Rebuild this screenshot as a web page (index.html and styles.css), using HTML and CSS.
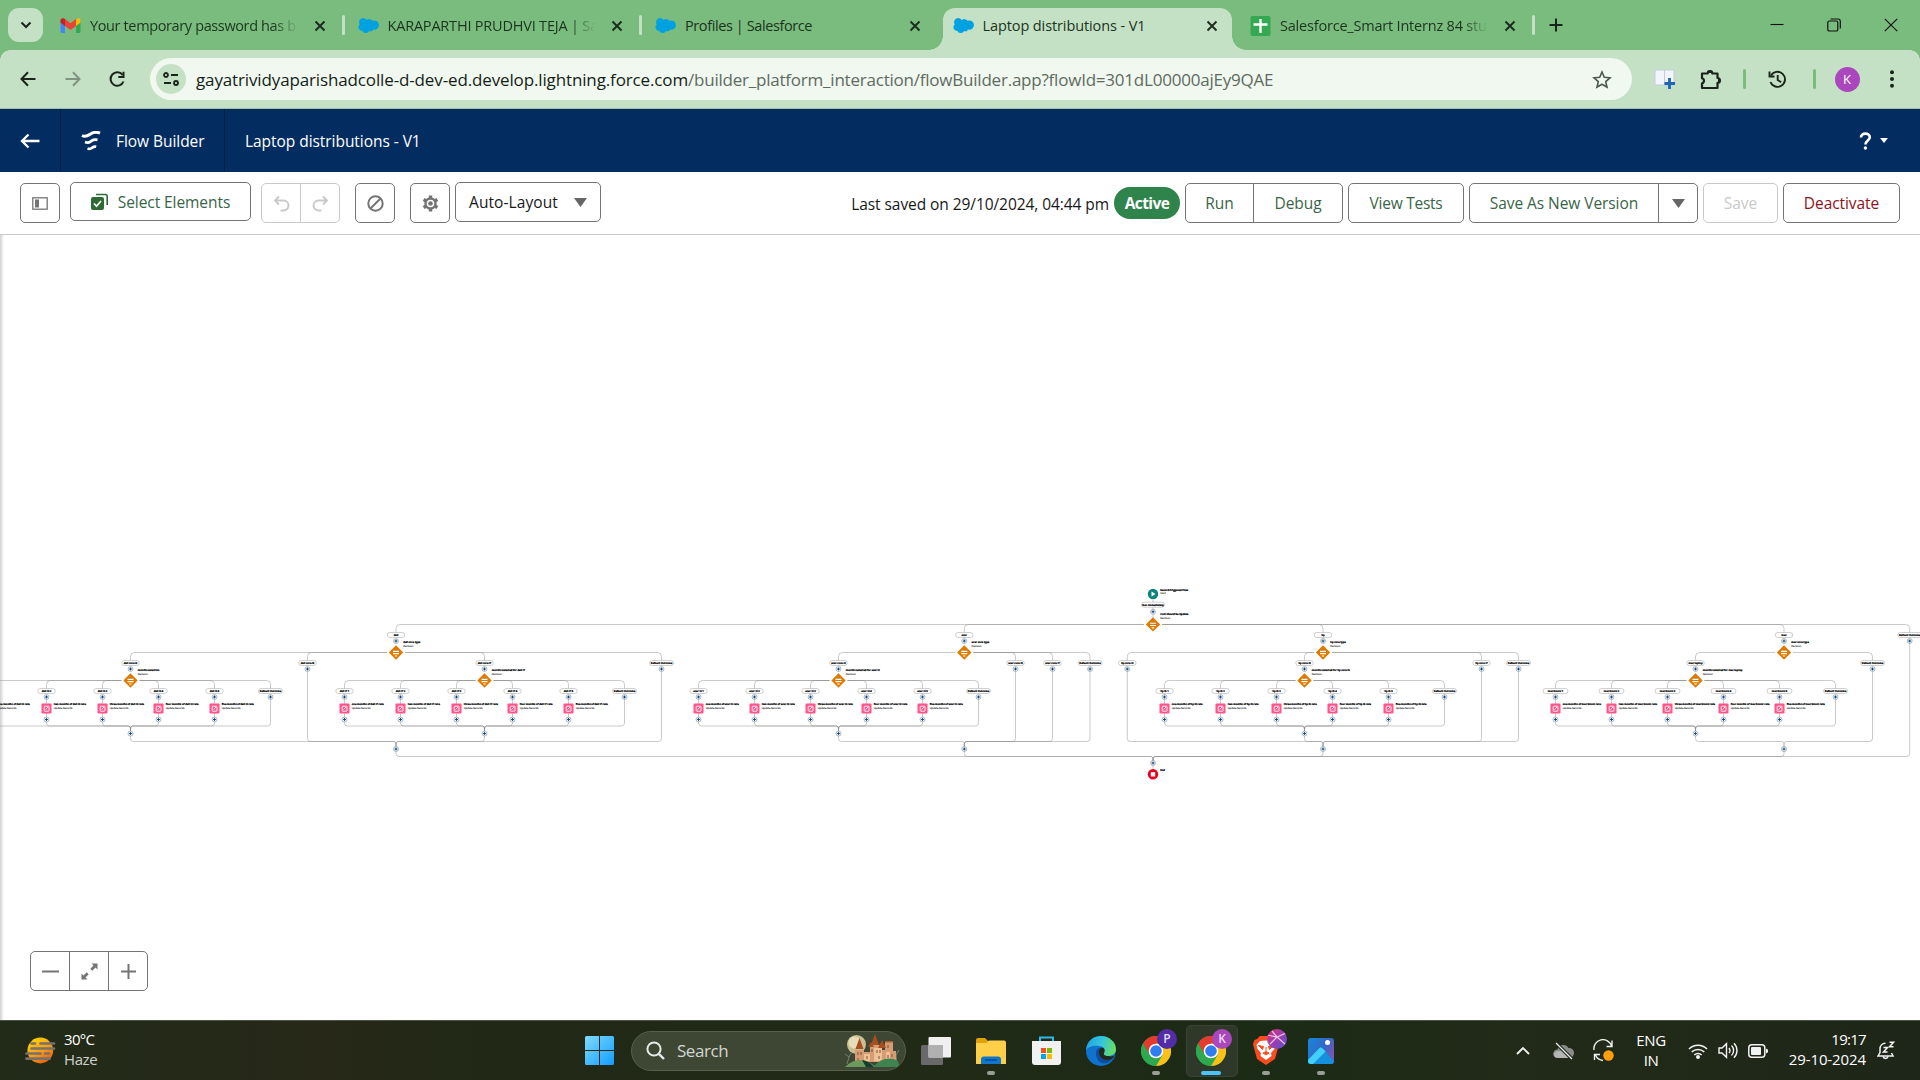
FILE: index.html
```html
<!DOCTYPE html>
<html lang="en">
<head>
<meta charset="utf-8">
<title>Laptop distributions - V1</title>
<link rel="stylesheet" href="styles.css">
</head>
<body>
<svg class="defs" width="0" height="0" aria-hidden="true">
  <defs>
    <symbol id="i-close" viewBox="0 0 12 12"><path d="M1.500 1.500l9 9M10.500 1.500l-9 9" fill="none" stroke="#1c2a1e" stroke-width="1.900"/></symbol>
    <symbol id="i-sf" viewBox="0 0 24 17"><path fill="#00a1e0" d="M10 2.200A4.600 4.600 0 0 1 16.600 3.100 5.300 5.300 0 1 1 17.600 13.200 3.800 3.800 0 0 1 12.700 14.800 4.400 4.400 0 0 1 4.800 14.400 4 4 0 0 1 2 7.300 4.700 4.700 0 0 1 10 2.200z"/></symbol>
    <symbol id="i-chrome" viewBox="0 0 30 30">
      <circle cx="15" cy="15" r="15" fill="#34a853"/>
      <path d="M2 7.500A15 15 0 0 1 28 7.500H15L8.500 18.750z" fill="#e33b2e"/>
      <path d="M28 7.500A15 15 0 0 1 15 30L21.500 18.750 15 7.500z" fill="#fbc116"/>
      <path d="M2 7.500A15 15 0 0 0 15 30L21.500 18.750H8.500z" fill="#2da94f"/>
      <circle cx="15" cy="15" r="7.300" fill="#fff"/><circle cx="15" cy="15" r="5.800" fill="#2f7df0"/>
    </symbol>
  </defs>
</svg>

<header class="tabstrip">
  <button class="tab-search"><svg width="12" height="8" viewBox="0 0 12 8"><path d="M1.500 1.500L6 6l4.500-4.500" fill="none" stroke="#1b241c" stroke-width="2"/></svg></button>
  <div class="tab">
    <svg class="fav" width="20" height="15" viewBox="0 0 20 15"><path fill="#4285f4" d="M0 2h4.500v13H1.500A1.500 1.500 0 0 1 0 13.500z"/><path fill="#34a853" d="M15.500 2H20v11.500a1.500 1.500 0 0 1-1.500 1.500h-3z"/><path fill="#fbbc04" d="M15.500 1.500C17-.3 20-.3 20 2.500v2L15.500 8z"/><path fill="#c5221f" d="M0 2.500C0-.3 3-.3 4.500 1v7L0 4.500z"/><path fill="#ea4335" d="M4.500 1L10 5.200 15.500 1v7L10 12 4.500 8z"/></svg>
    <span class="title fade tight">Your temporary password has b</span><svg class="x" width="12" height="12"><use href="#i-close"/></svg>
  </div>
  <div class="tab sep">
    <svg class="fav" width="21" height="15"><use href="#i-sf"/></svg>
    <span class="title fade">KARAPARTHI PRUDHVI TEJA | Sa</span><svg class="x" width="12" height="12"><use href="#i-close"/></svg>
  </div>
  <div class="tab sep">
    <svg class="fav" width="21" height="15"><use href="#i-sf"/></svg>
    <span class="title tighter">Profiles | Salesforce</span><svg class="x" width="12" height="12"><use href="#i-close"/></svg>
  </div>
  <div class="tab active">
    <svg class="fav" width="21" height="15"><use href="#i-sf"/></svg>
    <span class="title wide">Laptop distributions - V1</span><svg class="x" width="12" height="12"><use href="#i-close"/></svg>
  </div>
  <div class="tab last">
    <svg class="fav" width="20" height="20" viewBox="0 0 20 20"><rect width="20" height="20" rx="2" fill="#34a853"/><path d="M10 3v14M3 8.500h14" stroke="#fff" stroke-width="2.400"/></svg>
    <span class="title fade">Salesforce_Smart Internz 84 stu</span><svg class="x" width="12" height="12"><use href="#i-close"/></svg>
  </div>
  <svg class="newtab" width="14" height="14" viewBox="0 0 14 14"><path d="M7 .5v13M.5 7h13" stroke="#1b241c" stroke-width="2"/></svg>
  <div class="winctl">
    <svg width="14" height="14" viewBox="0 0 14 14"><path d="M.5 6.500h13" stroke="#111" stroke-width="1.100"/></svg>
    <svg width="14" height="14" viewBox="0 0 14 14"><g fill="none" stroke="#111" stroke-width="1.200"><rect x=".8" y="3" width="10" height="10" rx="1.600"/><path d="M3.500 1H11a2.300 2.300 0 0 1 2.300 2.300V10.500"/></g></svg>
    <svg width="14" height="14" viewBox="0 0 14 14"><path d="M.8.8l12.400 12.400M13.200.8L.8 13.200" stroke="#111" stroke-width="1.200"/></svg>
  </div>
</header>

<div class="addressbar">
  <div class="navbtns">
    <svg width="16" height="16" viewBox="0 0 16 16"><path d="M15.500 8H1.500M8 1.300L1.500 8 8 14.700" fill="none" stroke="#1b241c" stroke-width="2"/></svg>
    <svg width="16" height="16" viewBox="0 0 16 16"><path d="M.5 8h14M8 1.300L14.500 8 8 14.700" fill="none" stroke="#7f9380" stroke-width="2"/></svg>
    <svg width="17" height="17" viewBox="0 0 17 17"><path d="M14.500 10.500A6.700 6.700 0 1 1 13.600 4" fill="none" stroke="#1b241c" stroke-width="2"/><path d="M15.500.8V7H9.300V5h4.200V.8z" fill="#1b241c"/></svg>
  </div>
  <div class="omnibox">
    <span class="site"><svg width="16" height="14" viewBox="0 0 16 14"><g fill="none" stroke="#1b241c" stroke-width="1.800"><circle cx="3" cy="3" r="2"/><path d="M8 3h7M1 11h7"/><circle cx="13" cy="11" r="2"/></g></svg></span>
    <span class="url"><span class="host">gayatrividyaparishadcolle-d-dev-ed.develop.lightning.force.com</span><span class="path">/builder_platform_interaction/flowBuilder.app?flowId=301dL00000ajEy9QAE</span></span>
    <svg class="star" width="20" height="19" viewBox="0 0 20 19"><path d="M10 2l2.300 5.300 5.700.5-4.300 3.800 1.300 5.600-5-3-5 3 1.300-5.600L2 7.800l5.700-.5z" fill="none" stroke="#4b574c" stroke-width="1.600"/></svg>
  </div>
  <div class="exts">
    <svg class="reader" width="22" height="20" viewBox="0 0 22 20"><rect x="1" y="1" width="19" height="15" rx="1" fill="#f2f5fb" stroke="#c4cbe0"/><path d="M10.500 1v15" stroke="#c4cbe0"/><path d="M15.500 9v11M10.500 14.500h10.500" stroke="#1f65b7" stroke-width="2.800"/></svg>
    <svg class="puzzle" width="22" height="21" viewBox="0 0 22 21"><path d="M2 4.500h5.700a2.300 2.300 0 0 1 4.600 0H17.500V9a2.400 2.400 0 0 1 0 4.800V19H2v-4.600a2.700 2.700 0 0 0 0-5.200z" fill="none" stroke="#1b241c" stroke-width="2.200" stroke-linejoin="round"/><path d="M7.500 4a2.400 2.400 0 0 1 4.800 0zM18 9a2.400 2.400 0 0 1 0 4.800z" fill="#1b241c"/></svg>
    <i class="bar"></i>
    <svg class="history" width="19" height="19" viewBox="0 0 19 19"><g fill="none" stroke="#1b241c" stroke-width="1.900"><path d="M2.500 12A7.500 7.500 0 1 0 3 5.600"/><path d="M1.500 1.500V6.500h5M9.700 5v5l3.500 2.200"/></g></svg>
    <i class="bar bar-end"></i>
    <span class="avatar">K</span>
    <svg class="menu" width="6" height="18" viewBox="0 0 6 18"><g fill="#1b241c"><circle cx="3" cy="2.200" r="2"/><circle cx="3" cy="9" r="2"/><circle cx="3" cy="15.800" r="2"/></g></svg>
  </div>
</div>

<nav class="appbar">
  <span class="back"><svg width="20" height="16" viewBox="0 0 20 16"><path d="M19.500 8H2M8.500 1.500L2 8l6.500 6.500" fill="none" stroke="#fff" stroke-width="2.300"/></svg></span>
  <span class="brand"><svg width="20" height="20" viewBox="0 0 20 20"><g fill="none" stroke="#fff" stroke-width="3"><path d="M1 4.500C5 6.500 7 4.500 9.500 3S15.500.7 19 2.200"/><path d="M4 11c3.500 1.500 4.500.2 6.500-1.200s3.500-1.500 6-.9" stroke-width="2.700"/><path d="M6.500 17.500c3 1 3.500 0 4.800-.9s2-1.300 3.900-.9" stroke-width="2.700"/></g></svg><span>Flow Builder</span></span>
  <span class="flowname">Laptop distributions - V1</span>
  <span class="help"><svg width="13" height="18" viewBox="0 0 13 18"><path d="M2 5.500C2 0 10.800.6 10.800 5.200c0 3.300-4.300 3.300-4.300 7.300" fill="none" stroke="#fff" stroke-width="2.700"/><circle cx="6.400" cy="16" r="1.700" fill="#fff"/></svg><svg width="8" height="5" viewBox="0 0 8 5"><path d="M0 0h8L4 5z" fill="#fff"/></svg></span>
</nav>

<div class="toolbar">
  <button class="btn icon"><svg width="16" height="13" viewBox="0 0 16 13"><rect x=".8" y=".8" width="14.400" height="11.400" fill="none" stroke="#747474" stroke-width="1.300"/><path d="M3 2.500h4v8H3z" fill="#747474"/></svg></button>
  <button class="btn select"><svg width="17" height="17" viewBox="0 0 17 17"><path d="M5 1.500h9.500a1.700 1.700 0 0 1 1.700 1.700V12" fill="none" stroke="#2e6b34" stroke-width="1.600"/><rect y="4" width="13" height="13" rx="2" fill="#2e6b34"/><path d="M3 10.500l2.500 2.700L10 8" fill="none" stroke="#fff" stroke-width="1.700"/></svg><span>Select Elements</span></button>
  <span class="group off"><button class="btn icon"><svg width="17" height="17" viewBox="0 0 17 17"><path d="M6 1.500L2 5.500l4 4M2 5.500h8.500a5 5 0 0 1 0 10H7.500" fill="none" stroke="#c9c9c9" stroke-width="1.900"/></svg></button><button class="btn icon"><svg width="17" height="17" viewBox="0 0 17 17"><path d="M11 1.500l4 4-4 4M15 5.500H6.500a5 5 0 0 0 0 10H9.500" fill="none" stroke="#c9c9c9" stroke-width="1.900"/></svg></button></span>
  <button class="btn icon ban"><svg width="17" height="17" viewBox="0 0 17 17"><g fill="none" stroke="#747474" stroke-width="2"><circle cx="8.500" cy="8.500" r="7.200"/><path d="M3.500 13.500l10-10"/></g></svg></button>
  <button class="btn icon gear"><svg width="17" height="17" viewBox="0 0 17 17"><g fill="none" stroke="#747474"><circle cx="8.500" cy="8.500" r="5" stroke-width="2.400"/><path d="M8.500 .5v3M8.500 13.500v3M1.600 4.500l2.600 1.500M12.800 11l2.600 1.500M1.600 12.500L4.200 11M12.800 6l2.600-1.500" stroke-width="3.400"/></g><circle cx="8.500" cy="8.500" r="2.300" fill="#747474"/></svg></button>
  <button class="btn layout"><span>Auto-Layout</span><svg width="13" height="9" viewBox="0 0 13 9"><path d="M0 0h13L6.500 9z" fill="#666"/></svg></button>
  <span class="saved">Last saved on 29/10/2024, 04:44 pm</span>
  <span class="badge">Active</span>
  <span class="group"><button class="btn w-run">Run</button><button class="btn w-debug">Debug</button></span>
  <button class="btn w-tests">View Tests</button>
  <span class="group"><button class="btn w-saveas">Save As New Version</button><button class="btn icon"><svg width="13" height="9" viewBox="0 0 13 9"><path d="M0 0h13L6.500 9z" fill="#666"/></svg></button></span>
  <button class="btn w-save">Save</button>
  <button class="btn w-deact">Deactivate</button>
</div>

<main class="canvas">
  <svg id="flow" class="flow" width="1920" height="785" viewBox="0 235 1920 785"></svg>
  <div class="zoomctl">
    <button><svg width="17" height="17" viewBox="0 0 17 17"><path d="M0 8.500h17" stroke="#747474" stroke-width="2"/></svg></button>
    <button><svg width="17" height="17" viewBox="0 0 17 17"><path d="M10.500.5h6v6l-2-2-3.200 3.200-2-2L12.500 2.500zM.5 16.500v-6l2 2 3.200-3.200 2 2-3.200 3.200 2 2z" fill="#747474"/></svg></button>
    <button><svg width="17" height="17" viewBox="0 0 17 17"><path d="M1 8.500h15M8.500 1v15" stroke="#747474" stroke-width="2"/></svg></button>
  </div>
</main>

<footer class="taskbar">
  <div class="weather">
    <svg width="31" height="27" viewBox="0 0 31 27"><defs><linearGradient id="sun" x1=".2" y1="0" x2=".8" y2="1"><stop offset="0" stop-color="#ffd400"/><stop offset=".5" stop-color="#f9a11a"/><stop offset="1" stop-color="#e8590c"/></linearGradient></defs><circle cx="15.300" cy="13.500" r="12.900" fill="url(#sun)"/><g stroke="#77716c" stroke-width="2.700" stroke-linecap="round"><path d="M6.500 6.500h3.500M15.500 6.500h13.500M6.500 11.500H29M1.500 16.500h14M20 16.500h4M1.500 21.700h23"/></g></svg>
    <div class="two"><span class="temp">30°C</span><span class="dim">Haze</span></div>
  </div>
  <svg class="start" width="29" height="29" viewBox="0 0 29 29"><defs><linearGradient id="win" x1="0" y1="0" x2="1" y2="1"><stop offset="0" stop-color="#7fdcff"/><stop offset="1" stop-color="#129cff"/></linearGradient></defs><path d="M0 1.500Q0 0 1.500 0H14v14H0zM15 0h12.500Q29 0 29 1.500V14H15zM0 15h14v14H1.500Q0 29 0 27.500zM15 15h14v12.500Q29 29 27.500 29H15z" fill="url(#win)"/></svg>
  <div class="search">
    <svg width="19" height="19" viewBox="0 0 19 19"><circle cx="8" cy="8" r="6.600" fill="none" stroke="#e8eaea" stroke-width="2"/><path d="M12.800 12.800L18 18" stroke="#e8eaea" stroke-width="2.400"/></svg>
    <span>Search</span>
    <svg class="castle" width="56" height="33" viewBox="0 0 56 33"><circle cx="12.500" cy="10.500" r="9.500" fill="#c9bf92"/><circle cx="10.500" cy="8.500" r="6" fill="#e6ddb8"/><path d="M3 30l2-7-4-3M5 23l2-4M53 30l-1-9 3-5M52 21l-3-4" stroke="#78806e" fill="none"/><path d="M11 16h9v2h6v-7h10v5h5V8h8v9h3v11H11z" fill="#d69d74"/><path d="M30 14h8v13h-8zM20 20h6v7h-6zM42 18h4v9h-4z" fill="#efc294"/><path d="M15.500 4l4 11h-8zM31 0l4 11h-8zM27 8l3 5h-6zM38 6l4 8h-8z" fill="#a84c22"/><path d="M41 7h8v1.500h-8z" fill="#a85c32"/><path d="M14 18v3M17 18v3M28 15v3M33 16v3M36 16v3M44 11v3M14 24v3M23 22v3M35 22v3M44 21v3M48 20v3" stroke="#7c5040"/><path d="M1 33q14-14 31 0z" fill="#6b9a5c"/><path d="M18 26q7 1 12 7H22z" fill="#133d2c"/><path d="M29 33q12-13 25-6l1 4-2 2z" fill="#3f8450"/></svg>
  </div>
  <div class="apps">
    <span class="app"><svg width="30" height="28" viewBox="0 0 30 28"><rect x="0" y="8" width="22" height="20" rx="1.500" fill="#69696b"/><rect x="7.500" width="22.500" height="20.500" rx="1" fill="#f0f0f0"/><path d="M7.500 8H22v12.500H7.500z" fill="#b0b0b0"/></svg></span>
    <span class="app run"><svg width="30" height="28" viewBox="0 0 30 28"><path d="M0 3a2 2 0 0 1 2-2h7l3 3v6H0z" fill="#e3a008"/><path d="M0 6h10l3-2.500h15a2 2 0 0 1 2 2V27H0z" fill="#ffcf48"/><path d="M5 27v-5q0-2.500 3-2.500h14q3 0 3 2.500v5z" fill="#1277cc"/><path d="M9 23h12" stroke="#0a4d8f" stroke-width="1.500"/></svg></span>
    <span class="app"><svg width="29" height="30" viewBox="0 0 29 30"><path d="M8 6V1.500h13V6" fill="none" stroke="#31b7ea" stroke-width="2"/><path d="M0 5h29v21a3 3 0 0 1-3 3H3a3 3 0 0 1-3-3z" fill="#f1f1f1"/><path d="M9 12h5v5H9z" fill="#f25022"/><path d="M15 12h5v5h-5z" fill="#7fba00"/><path d="M9 18h5v5H9z" fill="#00a4ef"/><path d="M15 18h5v5h-5z" fill="#ffb900"/></svg></span>
    <span class="app"><svg width="30" height="30" viewBox="0 0 30 30"><defs><linearGradient id="edge" x1="0" y1=".3" x2="1" y2=".5"><stop offset="0" stop-color="#1ea4e0"/><stop offset=".5" stop-color="#35c4dc"/><stop offset="1" stop-color="#68df5e"/></linearGradient></defs><circle cx="15" cy="15" r="15" fill="#0d73cf"/><path d="M0 14C1 5 7 0 15 0s15 6 15 13c0 5-4 7-8 7-3 0-5-1-4-3 2-4-1-7-5-7C7 9 2 11 0 14z" fill="url(#edge)"/><path d="M10 17c0-4 3-6 5-5 2 .5 3 2 2.500 4-1 4 3 7 9.500 4.500l1-.3C25 26 20 28 16 27c-4-1-6-5-6-10z" fill="#0f4d9c"/><path d="M18 17c2-4-1-6-3-5-3 2-3 8 2 11 4 2 8 1 11-2l2-5v3c-3 2-6 1.500-8 1-3 0-5-1-4-3z" fill="#222918"/></svg></span>
    <span class="app run"><svg width="30" height="30"><use href="#i-chrome"/></svg><b class="bdg p">P</b></span>
    <span class="app run cur"><svg width="30" height="30"><use href="#i-chrome"/></svg><b class="bdg k">K</b></span>
    <span class="app run"><svg width="26" height="29" viewBox="0 0 26 29"><path d="M7 0h12l3 3 2.500 1L26 8l-1 4-3 11-9 6-9-6L1 12 0 8l1.500-4L4 3z" fill="#fb4c1f"/><path d="M13 4.500l6 .5 3.500 4-1 4-3.500 4 .5 3-5.500 4-5.500-4L8 17l-3.500-4-1-4L7 5z" fill="#fff"/><path d="M5.500 9.500l5 1-1 3zM20.500 9.500l-5 1 1 3zM10 17l3-1.500L16 17l-3 2zM13 11v4" fill="#fb4c1f" stroke="#fb4c1f"/></svg><b class="bdg g"><svg width="20" height="20" viewBox="0 0 20 20"><path d="M0 6l10 2 9-4M5 2l5 6 8 7M3 15l7-7" fill="none" stroke="#f1bfe6" stroke-width="1.200"/></svg></b></span>
    <span class="app run"><svg width="26" height="26" viewBox="0 0 26 26"><defs><linearGradient id="ph" x1="0" x2="1" y1="0" y2=".6"><stop offset="0" stop-color="#1887dc"/><stop offset=".6" stop-color="#3267c4"/><stop offset="1" stop-color="#7b55b0"/></linearGradient></defs><rect width="26" height="26" rx="3" fill="url(#ph)"/><path d="M0 23l11-12.500a2.500 2.500 0 0 1 3.800 0L26 23a3 3 0 0 1-3 3H3a3 3 0 0 1-3-3z" fill="#1590dd"/><path d="M0 22L11 10.500a2.500 2.500 0 0 1 3.600 0l3 3L5 26H3a3 3 0 0 1-3-3z" fill="#41d0fa"/><circle cx="19.500" cy="4.500" r="2.500" fill="#fff"/></svg></span>
  </div>
  <div class="tray">
    <svg width="14" height="9" viewBox="0 0 14 9"><path d="M1 8l6-6 6 6" fill="none" stroke="#f2f2f2" stroke-width="1.900"/></svg>
    <svg class="cloud" width="21" height="18" viewBox="0 0 21 18"><path d="M4.500 16a4.300 4.300 0 0 1 0-8.600A6 6 0 0 1 15.500 6a5 5 0 0 1 1 10z" fill="#8b8d89"/><path d="M6 16q-5 0-5-3.500T6 9h3l8 7z" fill="#b6b7b4"/><path d="M3 1l16 16" stroke="#222b1e" stroke-width="3.500"/><path d="M3 1l16 16" stroke="#e8e8e8" stroke-width="1.300"/></svg>
    <svg class="sync" width="21" height="23" viewBox="0 0 21 23"><g fill="none" stroke="#f0f0f0" stroke-width="1.400"><path d="M1 11A9 9 0 0 1 18.500 7M19 1.500V7.500H13.500M10 21.500A9 9 0 0 1 2.500 16M1.500 21V15.500H7"/></g><circle cx="15.500" cy="16.500" r="5.200" fill="#ff9d0a"/></svg>
    <div class="two mid lang"><span>ENG</span><span>IN</span></div>
    <svg class="wifi" width="20" height="16" viewBox="0 0 20 16"><g fill="none" stroke="#f2f2f2" stroke-width="1.600"><path d="M1 6a12.700 12.700 0 0 1 18 0M3.700 9a9 9 0 0 1 12.600 0M6.300 12a5.300 5.300 0 0 1 7.400 0"/></g><circle cx="10" cy="14" r="2" fill="#f2f2f2"/></svg>
    <svg class="vol" width="20" height="17" viewBox="0 0 20 17"><g fill="none" stroke="#f2f2f2" stroke-width="1.400"><path d="M1 6h3l4.500-4.300v13.600L4 11H1z"/><path d="M11 6a4 4 0 0 1 0 5M13.500 3.500a7 7 0 0 1 0 10M16 1.200a10.500 10.500 0 0 1 0 14.600"/></g></svg>
    <svg class="vol" width="20" height="14" viewBox="0 0 20 14"><rect x=".8" y=".8" width="16" height="12.400" rx="3" fill="none" stroke="#f2f2f2" stroke-width="1.500"/><rect x="3" y="3" width="10" height="8" rx="1" fill="#f2f2f2"/><path d="M18 4.500v5l2-1.200V5.700z" fill="#f2f2f2"/></svg>
    <div class="two end clock"><span class="time">19:17</span><span>29-10-2024</span></div>
    <svg class="bell" width="18" height="19" viewBox="0 0 18 19"><g fill="none" stroke="#f2f2f2" stroke-width="1.500"><path d="M8.500 2.300C5 2.300 3 5 3 8v3.500L1 15h15l-1.500-3"/><path d="M6 15.500a2.600 2.600 0 0 0 5 0"/><path d="M6.500 6.500h4l-4 4.500h4M12.500 1.200h4l-4 4.500h4"/></g></svg>
  </div>
</footer>
<script src="flow.js"></script>
</body>
</html>
```
FILE: styles.css
```css
* { box-sizing: border-box; }
body { margin: 0; width: 1920px; height: 1080px; overflow: hidden; display: flex; flex-direction: column; background: #fff; font-family: "Open Sans", "Noto Sans", sans-serif; font-size: 16px; color: #181818; }
.defs { position: absolute; }
button { font: inherit; letter-spacing: inherit; margin: 0; padding: 0; background: none; border: 0; color: inherit; }
svg { display: block; flex: none; }

.tabstrip { height: 50px; flex: none; display: flex; align-items: center; background: #7abc7d; padding-left: 8px; }
.tab-search { width: 35px; height: 34px; border-radius: 11px; background: #c5e1c5; display: grid; place-items: center; margin-right: 4px; }
.tab { position: relative; width: 297.5px; height: 42px; margin-top: 8px; padding: 0 19px 7px 13px; display: flex; align-items: center; }
.tab.sep::before { content: ""; position: absolute; left: -3px; top: 7px; width: 3px; height: 20px; border-radius: 2px; background: #c5e1c5; }
.tab.last::after { content: ""; position: absolute; right: 0; top: 7px; width: 3px; height: 20px; border-radius: 2px; background: #c5e1c5; }
.fav { width: 21px; margin-right: 9px; }
.title { flex: 1; white-space: nowrap; overflow: hidden; font-size: 14.5px; color: #1b3420; letter-spacing: -.2px; margin-right: 16px; }
.title.tight { letter-spacing: -.37px; }
.title.tighter { letter-spacing: -.4px; }
.title.wide { letter-spacing: -.1px; }
.title.fade { -webkit-mask-image: linear-gradient(90deg, #000 88%, transparent); mask-image: linear-gradient(90deg, #000 88%, transparent); }
.tab.active::before { content: ""; position: absolute; z-index: 0; left: 3px; right: 5px; top: 0; bottom: 0; background: #c5e1c5; border-radius: 12px 12px 0 0; }
.tab.active::after { content: ""; position: absolute; left: -11px; right: -9px; bottom: 0; height: 14px; background: radial-gradient(circle at 0 0, transparent 13.5px, #c5e1c5 14px) left / 14px 14px no-repeat, radial-gradient(circle at 100% 0, transparent 13.5px, #c5e1c5 14px) right / 14px 14px no-repeat; }
.tab > * { position: relative; z-index: 1; }
.newtab { margin-left: 14.5px; }
.winctl { margin-left: auto; display: flex; gap: 43px; padding-right: 22px; }

.addressbar { height: 59px; flex: none; display: flex; align-items: center; background: #c5e1c5; border-bottom: 1px solid #a3bda4; position: relative; }
.addressbar::before { content: ""; position: absolute; inset: 0 0 auto; height: 10px; background: radial-gradient(circle at 100% 100%, transparent 9.5px, #7abc7d 10px) left / 10px 10px no-repeat, radial-gradient(circle at 0 100%, transparent 9.5px, #7abc7d 10px) right / 10px 10px no-repeat; }
.navbtns { width: 150px; padding-left: 20px; display: flex; align-items: center; gap: 28.5px; }
.omnibox { width: 1482px; height: 42px; border-radius: 21px; background: #f0f8f0; display: flex; align-items: center; padding: 0 20px 0 6px; }
.site { width: 30px; height: 30px; border-radius: 50%; background: #c5e1c5; display: grid; place-items: center; margin-right: 10px; }
.url { flex: 1; font-size: 17px; color: #5f6b60; white-space: nowrap; }
.host { color: #161d17; letter-spacing: -.135px; }
.path { letter-spacing: -.22px; }
.exts { flex: 1; display: flex; align-items: center; padding-left: 22px; }
.puzzle { margin-left: 24px; }
.bar { width: 3px; height: 20px; border-radius: 2px; background: #7abc7d; margin-left: 20.5px; }
.history { margin-left: 22px; }
.bar-end { margin-left: 26px; }
.avatar { width: 25px; height: 25px; border-radius: 50%; background: #ab47bc; color: #fff; font-size: 13px; line-height: 25px; text-align: center; margin-left: 19px; }
.menu { margin-left: 29.5px; }

.appbar { height: 63px; flex: none; background: #032d60; color: #fff; display: flex; align-items: center; font-size: 15.5px; letter-spacing: -.05px; }
.back { width: 61px; height: 63px; padding-left: 20px; border-right: 1px solid #011e44; display: flex; align-items: center; }
.brand { width: 164px; height: 63px; padding-left: 20px; border-right: 1px solid #011e44; display: flex; align-items: center; gap: 15px; }
.flowname { margin-left: 20px; }
.help { margin-left: auto; display: flex; align-items: center; gap: 8px; padding-right: 32px; }

.toolbar { height: 63px; flex: none; display: flex; align-items: center; padding: 0 20px; border-bottom: 1px solid #c9c9c9; font-size: 15.5px; letter-spacing: -.07px; white-space: nowrap; }
.btn { height: 40px; border: 1px solid #747474; border-radius: 5px; color: #396547; display: flex; align-items: center; justify-content: center; background: #fff; }
.btn.icon { width: 40px; }
.select { width: 181px; height: 39px; margin: -3px 10px 0; gap: 10px; }
.group { display: flex; }
.group .btn:first-child { border-radius: 5px 0 0 5px; }
.group .btn:last-child { border-radius: 0 5px 5px 0; margin-left: -1px; }
.group.off .btn { border-color: #c9c9c9; }
.ban { margin-left: 15px; }
.gear { margin: 0 5px 0 15px; }
.layout { width: 146px; color: #181818; gap: 16px; margin-top: -2px; letter-spacing: .09px; }
.saved { margin-left: auto; padding-top: 2px; }
.badge { width: 66px; height: 32px; border-radius: 16px; background: #2e844a; color: #fff; font-weight: 700; letter-spacing: -.6px; display: grid; place-items: center; margin: 0 5px; }
.w-run { width: 69px; } .w-debug { width: 90px; } .w-tests { width: 116px; margin: 0 5px; letter-spacing: -.25px; } .w-saveas { width: 190px; }
.w-save { width: 75px; margin: 0 5px; color: #c9c9c9; border-color: #c9c9c9; } .w-deact { width: 117px; color: #8e1220; }

.canvas { flex: 1; position: relative; background: linear-gradient(90deg, #d0d0d0, #fff 4px); display: flex; align-items: flex-end; }
.flow { position: absolute; inset: 0; }
.flow text { font-family: "Open Sans", sans-serif; font-size: 2.5px; fill: #222; text-rendering: geometricPrecision; stroke: #222; stroke-width: .08; }
.flow .t { font-weight: 700; fill: #000; stroke: #000; stroke-width: .22; }
.edge { fill: none; stroke: #8a8a8a; stroke-opacity: .5; stroke-width: .9; }
.pill { fill: #fff; stroke: #a0a0a0; stroke-width: .5; }
.plus { fill: #f1f4f7; stroke: #7c8894; stroke-width: .55; }
.cross { stroke: #0b4a86; stroke-width: 1; }
.zoomctl { position: relative; display: flex; margin: 0 0 29px 30px; border: 1px solid #747474; border-radius: 5px; background: #fff; }
.zoomctl button { width: 38px; height: 38px; display: grid; place-items: center; }
.zoomctl button + button { width: 39px; border-left: 1px solid #747474; }

.taskbar { height: 60px; flex: none; display: flex; align-items: center; color: #fff; font-size: 15px; border-top: 1px solid #4a5444; background: linear-gradient(90deg, #212b18, #272818 17%, #212916 25%, #202a17 50%, #1b2b15 67%, #222a18 78%, #1e2619 100%); }
.weather { width: 585px; padding-left: 25px; display: flex; align-items: center; gap: 8px; }
.two { display: flex; flex-direction: column; line-height: 20px; padding-bottom: 4px; }
.mid { align-items: center; padding-bottom: 2px; } .end { align-items: flex-end; }
.temp, .time { letter-spacing: -.7px; }
.dim { color: #cfd1cd; letter-spacing: -.4px; }
.search { width: 275px; height: 40px; border-radius: 20px; margin: 0 2.500px 0 17px; background: #3e4734; border: 1px solid #575f4d; display: flex; align-items: center; padding: 0 5px 0 14px; font-size: 17px; letter-spacing: -.45px; color: #d4d6d1; }
.search span { margin-left: 12px; }
.castle { margin-left: auto; }
.apps { display: flex; }
.app { width: 55px; height: 59px; display: grid; place-items: center; position: relative; }
.app > svg { position: relative; }
.run::after { content: ""; position: absolute; left: 23.500px; bottom: 5px; width: 8px; height: 4px; border-radius: 2px; background: #9a9f96; }
.cur::before { content: ""; position: absolute; left: 2px; top: 4px; width: 50px; height: 50px; border-radius: 5px; background: #2f392a; border: 1px solid #3a4435; }
.cur::after { left: 17.500px; width: 20px; background: #4cc2ff; }
.bdg { position: absolute; left: 28.500px; top: 8px; width: 20px; height: 20px; border-radius: 50%; font-size: 12px; line-height: 20px; text-align: center; font-weight: 600; color: #e8dcf5; overflow: hidden; }
.p { background: #512da8; } .k { background: #ab47bc; } .g { background: linear-gradient(135deg, #d8307c, #5a4fd8); }
.tray { margin-left: auto; display: flex; align-items: center; padding-right: 25px; }
.cloud { margin-left: 22.5px; }
.sync { margin-left: 19px; }
.lang { width: 30px; margin-left: 22.5px; letter-spacing: -.4px; }
.wifi { margin-left: 22px; }
.vol { margin-left: 10px; }
.clock { width: 80px; margin-left: 18px; letter-spacing: -.1px; }
.bell { margin-left: 11px; }
```
FILE: flow.js
```js
const svg = document.getElementById('flow');
const out = { edges: [], nodes: [] };
const edge = d => out.edges.push(`<path class="edge" d="${d}"/>`);
const node = s => out.nodes.push(s);

function text(x, y, s, cls = '', anchor = 'start') {
  node(`<text x="${x}" y="${y}" class="${cls}" text-anchor="${anchor}">${s}</text>`);
}
function pill(x, y, s, w = 17.5) {
  node(`<rect class="pill" x="${x - w / 2}" y="${y - 2.5}" width="${w}" height="5" rx="2.500"/>`);
  text(x, y + .9, s, 't', 'middle');
}
function plus(x, y) {
  node(`<circle class="plus" cx="${x}" cy="${y}" r="2.500"/><path class="cross" d="M${x - 1.4} ${y}h2.800M${x} ${y - 1.4}v2.800"/>`);
}
function decision(x, y, s, dy = -9.3) {
  node(`<path d="M${x} ${y - 7.2}l7.200 7.200-7.200 7.200-7.200-7.200z" fill="#dd7a01"/><path d="M${x - 3} ${y - 1.1}h6M${x - 3} ${y + 1.1}h6M${x - 1.2} ${y + 3.5}h2.400" stroke="#fff" stroke-width="1.100"/>`);
  text(x + 7.3, y + dy, s, 't');
  text(x + 7.3, y + dy + 3.9, 'Decision');
}
function update(x, y, s) {
  node(`<rect x="${x - 5}" y="${y - 5}" width="10" height="10" rx="1" fill="#ff538a"/><rect x="${x - 2.3}" y="${y - 2.3}" width="4.800" height="5" rx=".5" fill="none" stroke="#fff" stroke-width=".9"/><path d="M${x - 1} ${y + 1.2}l2.500-2.700" stroke="#fff" stroke-width=".9"/>`);
  text(x + 7.3, y - 3.5, s, 't');
  text(x + 7.3, y + .5, 'Update Records');
}
const fork = (px, cx, y) => { const s = Math.sign(cx - px); edge(`M${px + 9 * s} ${y}H${cx - 4 * s}Q${cx} ${y} ${cx} ${y + 4}V${y + 8}`); };
function join(cx, px, y0, y) {
  const s = Math.sign(px - cx);
  edge(s ? `M${cx} ${y0}V${y - 3}Q${cx} ${y} ${cx + 3 * s} ${y}H${px - 2 * s}Q${px} ${y} ${px} ${y + 3}V${y + 6}` : `M${cx} ${y0}V${y + 6}`);
}
const COUNT = ['one', 'two', 'three', 'four', 'five'];

function months(cx, product, label, w) {
  decision(cx, 680.5, label);
  for (let i = 0; i < 6; i++) {
    const x = cx - 140 + i * 56;
    fork(cx, x, 680.5);
    pill(x, 691, i < 5 ? `${product} ${i + 1}` : 'Default Outcome', i < 5 ? w : 24);
    plus(x, 697);
    if (i < 5) {
      edge(`M${x} 697V719`);
      update(x, 708.5, `${COUNT[i]} months of ${product} rate`);
      plus(x, 719.5);
    }
    join(x, cx, i < 5 ? 719.5 : 697, 726);
  }
  plus(cx, 733.5);
}

const brands = [
  { x: 396, name: 'dell', title: 'dell core type', kids: [[130.5, 'dell core i3', 'months selection', 'dell i3'], [307.5, 'dell core i5'], [484.5, 'dell core i7', 'months selected for dell i7', 'dell i7'], [661.5, 'Default Outcome']] },
  { x: 964.3, name: 'acer', title: 'acer core type', kids: [[838.5, 'acer core i3', 'months selected for acer i3', 'acer i3'], [1015.5, 'acer core i5'], [1052.5, 'acer core i7'], [1090, 'Default Outcome']] },
  { x: 1323, name: 'hp', title: 'hp core type', kids: [[1127.3, 'hp core i3'], [1304.5, 'hp core i5', 'months selected for hp core i5', 'hp i5'], [1481.5, 'hp core i7'], [1518.5, 'Default Outcome']] },
  { x: 1784, name: 'mac', title: 'mac core type', kids: [[1695.5, 'mac laptop', 'months selected for mac laptop', 'mac bionic', 25], [1872.5, 'Default Outcome']] }
];

const ROOT = 1153;
edge(`M${ROOT} 600V618`);
node(`<circle cx="${ROOT}" cy="594" r="5.200" fill="#0b827c"/><path d="M${ROOT - 1.5} 591.500l4 2.500-4 2.500z" fill="#fff"/>`);
text(ROOT + 7.3, 591, 'Record-Triggered Flow', 't');
text(ROOT + 7.3, 593.8, 'Start');
pill(ROOT, 604.7, 'Run Immediately', 23);
plus(ROOT, 611.7);
decision(ROOT, 624.4, 'Cost should be Update');

for (const b of brands) {
  fork(ROOT, b.x, 624.5);
  pill(b.x, 635, b.name);
  plus(b.x, 641);
  decision(b.x, 652.5, b.title);
  for (const [x, name, label, product, w] of b.kids) {
    fork(b.x, x, 652.5);
    pill(x, 663, name, name === 'Default Outcome' ? 24 : 17.5);
    plus(x, 669);
    if (label) months(x, product, label, w);
    join(x, b.x, label ? 733.5 : 669, 741.5);
  }
  plus(b.x, 749);
  join(b.x, ROOT, 749, 756.5);
}
fork(ROOT, 1909.7, 624.5);
pill(1909.7, 635, 'Default Outcome', 24);
plus(1909.7, 641);
join(1909.7, ROOT, 641, 756.5);
plus(ROOT, 763);
edge(`M${ROOT} 763V769`);
node(`<circle cx="${ROOT}" cy="774.300" r="5.200" fill="#ea001e"/><rect x="${ROOT - 2.2}" y="772.100" width="4.400" height="4.400" fill="#fff"/>`);
text(ROOT + 7.3, 771, 'End', 't');

svg.innerHTML = out.edges.join('') + out.nodes.join('');
```
